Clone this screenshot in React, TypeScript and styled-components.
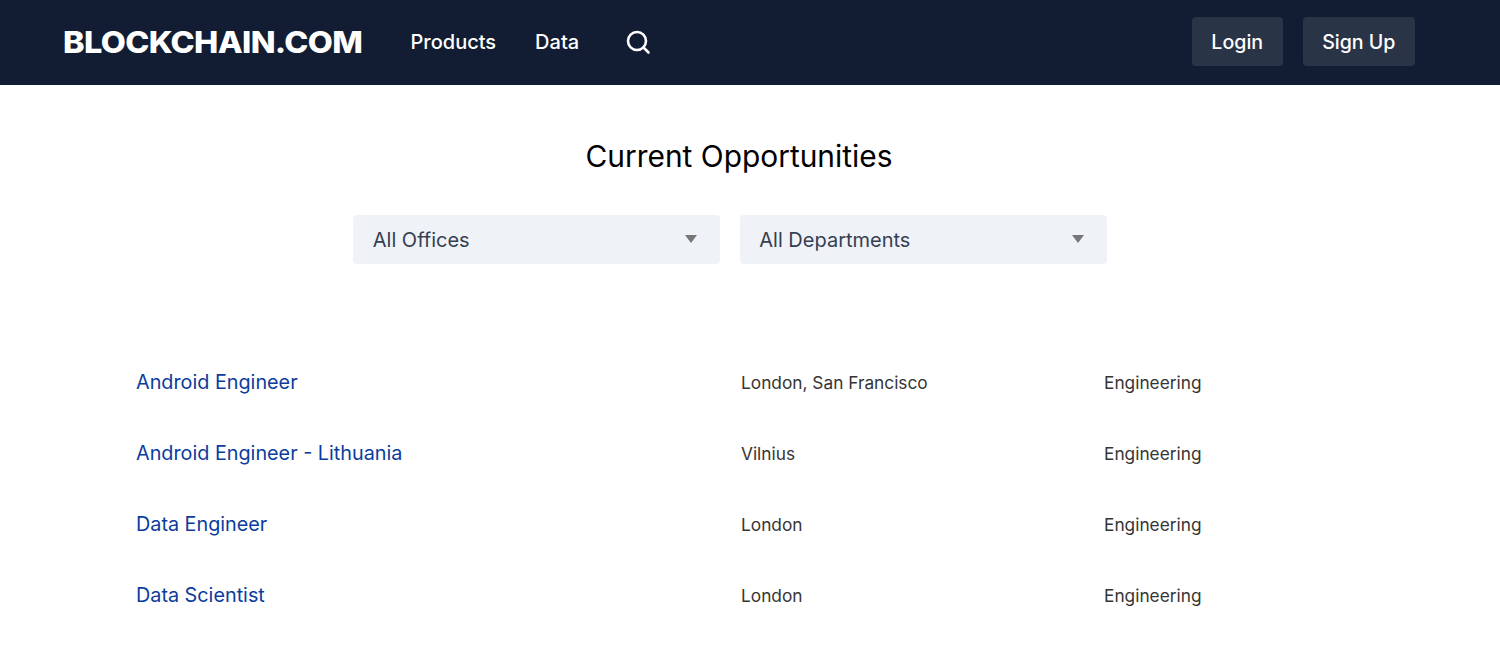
import React from "react";
import styled, { createGlobalStyle } from "styled-components";

const Global = createGlobalStyle`
  html, body { margin: 0; padding: 0; background: #fff; font-family: Inter, "Liberation Sans", sans-serif; }
  * { box-sizing: border-box; }
`;
const Header = styled.header`
  height: 85px; background: #121d33; display: flex; align-items: center;
  padding: 0 85px 2px 63px; color: #fff;
`;
const LogoSlot = styled.div`
  width: 347.5px; flex: none;
`;
const Logo = styled.a`
  display: inline-block; font: 800 30px/1 Inter, sans-serif; letter-spacing: -0.6px; color: #fff;
  transform: scaleX(1.082); transform-origin: left center; white-space: nowrap;
`;
const NavLink = styled.a`
  font-size: 20px; font-weight: 500; color: #fff; margin-right: 39px;
`;
const SearchIcon = styled.svg`
  width: 26px; height: 26px; margin-left: 7px; fill: none; stroke: #fff; stroke-width: 2.6; stroke-linecap: round;
`;
const Actions = styled.div`
  margin-left: auto; display: flex; gap: 20px;
`;
const Button = styled.button`
  height: 49px; padding: 0 19.5px; border: 0; border-radius: 4px; background: #2a3447; color: #fff;
  font: 500 19.6px Inter, sans-serif;
`;
const Title = styled.h1`
  margin: 51px 0 0 -22px; font-size: 29.9px; font-weight: 400; line-height: 40px; color: #000; text-align: center;
`;
const Filters = styled.div`
  display: flex; justify-content: center; gap: 19.5px; margin: 39px 0 0 -40px;
`;
const Select = styled.div`
  width: 367px; height: 49px; border-radius: 4px; background: #eff2f7; color: #353f52;
  font-size: 20px; display: flex; align-items: center; justify-content: space-between; padding: 0 23px 0 19.5px;
`;
const Caret = styled.span`
  width: 0; height: 0; border-left: 6.5px solid transparent; border-right: 6.5px solid transparent;
  border-top: 8px solid #777;
  margin-bottom: 1px;
`;
const Jobs = styled.div`
  margin-top: 86px; padding-left: 136px; display: grid;
`;
const Job = styled.div`
  display: grid; grid-template-columns: 605px 363px 1fr; height: 71px; align-items: center;
  padding-bottom: 6px;
`;
const JobLink = styled.a`
  color: #0c3c9c; font-size: 19.8px; font-weight: 400; margin-bottom: 2px;
`;
const Cell = styled.span`
  color: #353535; font-size: 17.3px;
`;

const jobs = [
  ["Android Engineer", "London, San Francisco"],
  ["Android Engineer - Lithuania", "Vilnius"],
  ["Data Engineer", "London"],
  ["Data Scientist", "London"],
];

export default function App() {
  return (
    <>
      <Global />
      <Header>
        <LogoSlot><Logo>BLOCKCHAIN.COM</Logo></LogoSlot>
        <NavLink>Products</NavLink>
        <NavLink>Data</NavLink>
        <SearchIcon viewBox="0 0 26 26">
          <circle cx="12" cy="12" r="9" />
          <path d="M18.5 18.5 L23.5 23.5" />
        </SearchIcon>
        <Actions>
          <Button>Login</Button>
          <Button>Sign Up</Button>
        </Actions>
      </Header>
      <main>
        <Title>Current Opportunities</Title>
        <Filters>
          <Select>All Offices<Caret /></Select>
          <Select>All Departments<Caret /></Select>
        </Filters>
        <Jobs>
          {jobs.map(([name, place]) => (
            <Job key={name}>
              <JobLink>{name}</JobLink>
              <Cell>{place}</Cell>
              <Cell>Engineering</Cell>
            </Job>
          ))}
        </Jobs>
      </main>
    </>
  );
}
